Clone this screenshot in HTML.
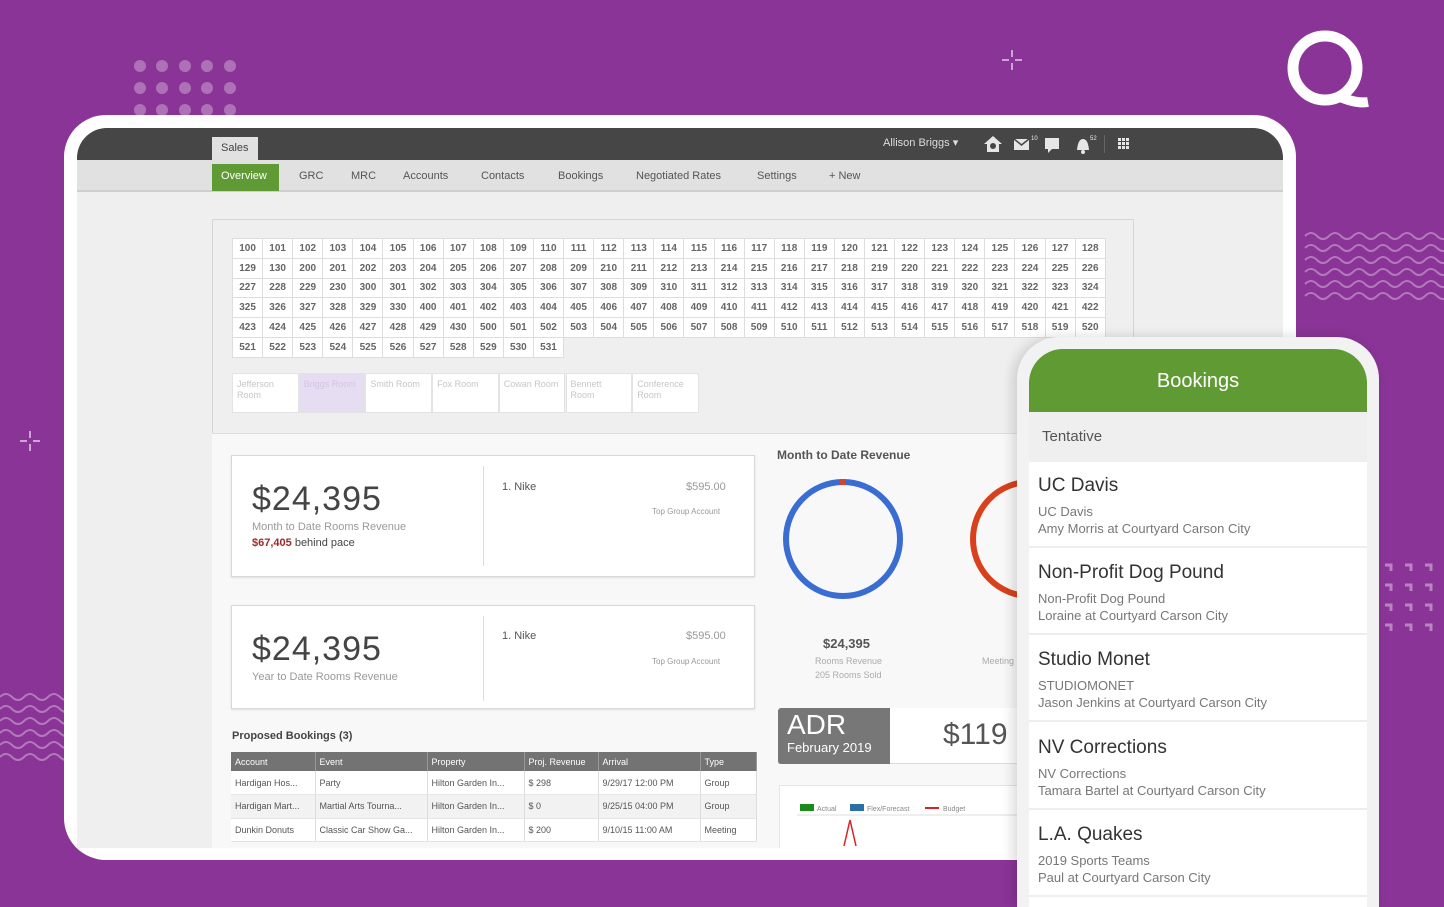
<!DOCTYPE html>
<html style="width:1444px;height:907px;overflow:hidden"><head><meta charset="utf-8"><style>
*{margin:0;padding:0;box-sizing:border-box}
body{width:1444px;height:907px;overflow:hidden;background:#8a3497;font-family:"Liberation Sans",sans-serif;position:relative}
.abs{position:absolute}
.tablet{left:64px;top:115px;width:1232px;height:745px;background:#fff;border-radius:42px}
.screen{left:77px;top:128px;width:1206px;height:720px;background:#efefef;border-radius:30px 30px 0 0;overflow:hidden}
.top{left:0;top:0;width:1206px;height:32px;background:#464646}
.nav{left:0;top:32px;width:1206px;height:32px;background:#e1e1e1;border-bottom:2px solid #cfcfcf}
.nav span{position:absolute;top:10px;font-size:11px;color:#555}
table.rooms{border-collapse:collapse;position:absolute;left:155px;top:110px}
table.rooms td{width:30.1px;height:19.8px;border:1px solid #ddd;background:#fff;font-size:10px;font-weight:bold;color:#666;text-align:center}
.rl{position:absolute;top:245px;height:40px;width:66.7px;background:#fff;border:1px solid #e3e3e3;font-size:9px;color:#c6c6c6;padding:5px 4px;line-height:11px}
.box{background:#fff;border:1px solid #d8d8d8;box-shadow:0 1px 2px rgba(0,0,0,.1)}
.big{font-size:34px;color:#444;letter-spacing:1px}
.sub{font-size:11px;color:#999}
table.pb{border-collapse:collapse;position:absolute;left:154px;top:624px;width:526px;font-size:9px;color:#555}
table.pb th{background:#737373;color:#fff;text-align:left;font-weight:normal;height:19px;padding-left:4px;border-right:1px solid #999}
table.pb td{height:23.5px;padding-left:4px;border-right:1px solid #ddd;border-bottom:1px solid #e5e5e5;background:#fff}
table.pb tr:nth-child(3) td{background:#f2f2f2}
.phone{left:1017px;top:337px;width:362px;height:570px;background:#f2f2f2;border-radius:42px 42px 0 0;box-shadow:-4px 0 12px rgba(0,0,0,.15);overflow:hidden}
.pin{left:12px;top:12px;width:338px;height:558px;background:#fff;border-radius:34px 34px 0 0;overflow:hidden}
.item{position:absolute;left:0;width:338px;height:85px;background:#fff;border-bottom:2px solid #eee;padding:12px 9px}
.item h3{font-weight:normal;font-size:19px;color:#333;margin-bottom:6px}
.item p{font-size:13px;color:#777;line-height:17px}
.dot{position:absolute;width:12px;height:12px;border-radius:50%;background:rgba(255,255,255,.3)}
</style></head><body>
<div class="dot" style="left:134px;top:60px"></div><div class="dot" style="left:156px;top:60px"></div><div class="dot" style="left:179px;top:60px"></div><div class="dot" style="left:201px;top:60px"></div><div class="dot" style="left:224px;top:60px"></div>
<div class="dot" style="left:134px;top:82px"></div><div class="dot" style="left:156px;top:82px"></div><div class="dot" style="left:179px;top:82px"></div><div class="dot" style="left:201px;top:82px"></div><div class="dot" style="left:224px;top:82px"></div>
<div class="dot" style="left:134px;top:104px"></div><div class="dot" style="left:156px;top:104px"></div><div class="dot" style="left:179px;top:104px"></div><div class="dot" style="left:201px;top:104px"></div><div class="dot" style="left:224px;top:104px"></div>
<svg class="abs" style="left:0;top:0" width="1444" height="907">
<g stroke="rgba(255,255,255,.75)" stroke-width="1.5" fill="none">
<path d="M1012 50v7M1012 63v7M1002 60h7M1015 60h7"/>
<path d="M30 431v7M30 444v7M20 441h7M33 441h7"/>
</g>
<g stroke="rgba(255,255,255,.35)" stroke-width="2" fill="none">
<path d="M1305 236q6-6 12 0t12 0t12 0t12 0t12 0t12 0t12 0t12 0t12 0t12 0t12 0t12 0"/>
<path d="M1305 248q6-6 12 0t12 0t12 0t12 0t12 0t12 0t12 0t12 0t12 0t12 0t12 0t12 0"/>
<path d="M1305 260q6-6 12 0t12 0t12 0t12 0t12 0t12 0t12 0t12 0t12 0t12 0t12 0t12 0"/>
<path d="M1305 272q6-6 12 0t12 0t12 0t12 0t12 0t12 0t12 0t12 0t12 0t12 0t12 0t12 0"/>
<path d="M1305 284q6-6 12 0t12 0t12 0t12 0t12 0t12 0t12 0t12 0t12 0t12 0t12 0t12 0"/>
<path d="M1305 296q6-6 12 0t12 0t12 0t12 0t12 0t12 0t12 0t12 0t12 0t12 0t12 0t12 0"/>
<path d="M0 697q6-6 12 0t12 0t12 0t12 0t12 0t12 0"/>
<path d="M0 709q6-6 12 0t12 0t12 0t12 0t12 0t12 0"/>
<path d="M0 721q6-6 12 0t12 0t12 0t12 0t12 0t12 0"/>
<path d="M0 733q6-6 12 0t12 0t12 0t12 0t12 0t12 0"/>
<path d="M0 745q6-6 12 0t12 0t12 0t12 0t12 0t12 0"/>
<path d="M0 757q6-6 12 0t12 0t12 0t12 0t12 0t12 0"/>
</g>
<g stroke="rgba(255,255,255,.4)" stroke-width="3" fill="none">
<path d="M1385 565h6v6M1405 565h6v6M1425 565h6v6M1385 585h6v6M1405 585h6v6M1425 585h6v6M1385 605h6v6M1405 605h6v6M1425 605h6v6M1385 625h6v6M1405 625h6v6M1425 625h6v6"/>
</g>
<circle cx="1325" cy="68" r="32" stroke="#fff" stroke-width="11" fill="none"/>
<path d="M1338 96q18 8 30 6" stroke="#fff" stroke-width="10" fill="none"/>
</svg>
<div class="abs tablet"></div>
<div class="abs screen">
 <div class="abs top"></div>
 <div class="abs" style="left:135px;top:9px;width:46px;height:23px;background:#e1e1e1;font-size:11px;color:#444;padding:5px 0 0 9px">Sales</div>
 <div class="abs" style="left:806px;top:8px;font-size:11px;color:#ddd">Allison Briggs ▾</div>
 <svg class="abs" style="left:905px;top:5px" width="160" height="22" fill="#e6e6e6">
  <path d="M2 11l9-8 9 8h-3v8H5v-8z"/><circle cx="11" cy="13" r="3" fill="#464646"/>
  <rect x="32" y="6" width="15" height="11"/><path d="M32 6l7.5 6 7.5-6" stroke="#464646" fill="none" stroke-width="1.5"/>
  <text x="49" y="7" font-size="6" fill="#eee">10</text>
  <rect x="63" y="5" width="14" height="11"/><path d="M66 16l0 4 4-4z"/>
  <path d="M95 17q1-11 6-11t6 11z"/><circle cx="101" cy="19" r="2"/><text x="108" y="7" font-size="6" fill="#eee">52</text>
  <rect x="122" y="2" width="1" height="18" fill="#666"/>
  <g><rect x="136" y="5" width="3" height="3"/><rect x="140" y="5" width="3" height="3"/><rect x="144" y="5" width="3" height="3"/><rect x="136" y="9" width="3" height="3"/><rect x="140" y="9" width="3" height="3"/><rect x="144" y="9" width="3" height="3"/><rect x="136" y="13" width="3" height="3"/><rect x="140" y="13" width="3" height="3"/><rect x="144" y="13" width="3" height="3"/></g>
 </svg>
 <div class="abs nav">
  <div class="abs" style="left:135px;top:4px;width:67px;height:27px;background:#5f9a35"></div>
  <span style="left:144px;color:#fff">Overview</span><span style="left:222px">GRC</span><span style="left:274px">MRC</span><span style="left:326px">Accounts</span><span style="left:404px">Contacts</span><span style="left:481px">Bookings</span><span style="left:559px">Negotiated Rates</span><span style="left:680px">Settings</span><span style="left:752px">+ New</span>
 </div>
 <div class="abs" style="left:135px;top:91px;width:922px;height:215px;border:1px solid #d5d5d5;border-bottom:none"></div>
 <table class="rooms">
 <tr><td>100</td><td>101</td><td>102</td><td>103</td><td>104</td><td>105</td><td>106</td><td>107</td><td>108</td><td>109</td><td>110</td><td>111</td><td>112</td><td>113</td><td>114</td><td>115</td><td>116</td><td>117</td><td>118</td><td>119</td><td>120</td><td>121</td><td>122</td><td>123</td><td>124</td><td>125</td><td>126</td><td>127</td><td>128</td></tr>
 <tr><td>129</td><td>130</td><td>200</td><td>201</td><td>202</td><td>203</td><td>204</td><td>205</td><td>206</td><td>207</td><td>208</td><td>209</td><td>210</td><td>211</td><td>212</td><td>213</td><td>214</td><td>215</td><td>216</td><td>217</td><td>218</td><td>219</td><td>220</td><td>221</td><td>222</td><td>223</td><td>224</td><td>225</td><td>226</td></tr>
 <tr><td>227</td><td>228</td><td>229</td><td>230</td><td>300</td><td>301</td><td>302</td><td>303</td><td>304</td><td>305</td><td>306</td><td>307</td><td>308</td><td>309</td><td>310</td><td>311</td><td>312</td><td>313</td><td>314</td><td>315</td><td>316</td><td>317</td><td>318</td><td>319</td><td>320</td><td>321</td><td>322</td><td>323</td><td>324</td></tr>
 <tr><td>325</td><td>326</td><td>327</td><td>328</td><td>329</td><td>330</td><td>400</td><td>401</td><td>402</td><td>403</td><td>404</td><td>405</td><td>406</td><td>407</td><td>408</td><td>409</td><td>410</td><td>411</td><td>412</td><td>413</td><td>414</td><td>415</td><td>416</td><td>417</td><td>418</td><td>419</td><td>420</td><td>421</td><td>422</td></tr>
 <tr><td>423</td><td>424</td><td>425</td><td>426</td><td>427</td><td>428</td><td>429</td><td>430</td><td>500</td><td>501</td><td>502</td><td>503</td><td>504</td><td>505</td><td>506</td><td>507</td><td>508</td><td>509</td><td>510</td><td>511</td><td>512</td><td>513</td><td>514</td><td>515</td><td>516</td><td>517</td><td>518</td><td>519</td><td>520</td></tr>
 <tr><td>521</td><td>522</td><td>523</td><td>524</td><td>525</td><td>526</td><td>527</td><td>528</td><td>529</td><td>530</td><td>531</td></tr>
 </table>
 <div class="rl" style="left:155px">Jefferson Room</div>
 <div class="rl" style="left:221.7px;background:#e7ddf2;color:#d2c4e2">Briggs Room</div>
 <div class="rl" style="left:288.4px">Smith Room</div>
 <div class="rl" style="left:355.1px">Fox Room</div>
 <div class="rl" style="left:421.8px">Cowan Room</div>
 <div class="rl" style="left:488.5px">Bennett Room</div>
 <div class="rl" style="left:555.2px">Conference Room</div>
 <div class="abs" style="left:135px;top:305px;width:1071px;height:420px;background:#f8f8f8;border-top:1px solid #ddd"></div>
 <div class="abs box" style="left:154px;top:327px;width:524px;height:122px">
  <div class="abs big" style="left:20px;top:24px">$24,395</div>
  <div class="abs sub" style="left:20px;top:65px">Month to Date Rooms Revenue</div>
  <div class="abs" style="left:20px;top:81px;font-size:11px;color:#444"><b style="color:#9b2a2a">$67,405</b> behind pace</div>
  <div class="abs" style="left:251px;top:10px;width:1px;height:100px;background:#ddd"></div>
  <div class="abs" style="left:270px;top:25px;font-size:11px;color:#555">1. Nike</div>
  <div class="abs" style="left:454px;top:25px;font-size:11px;color:#999">$595.00</div>
  <div class="abs" style="left:420px;top:51px;font-size:8px;color:#999">Top Group Account</div>
 </div>
 <div class="abs box" style="left:154px;top:477px;width:524px;height:104px">
  <div class="abs big" style="left:20px;top:24px">$24,395</div>
  <div class="abs sub" style="left:20px;top:65px">Year to Date Rooms Revenue</div>
  <div class="abs" style="left:251px;top:10px;width:1px;height:85px;background:#ddd"></div>
  <div class="abs" style="left:270px;top:24px;font-size:11px;color:#555">1. Nike</div>
  <div class="abs" style="left:454px;top:24px;font-size:11px;color:#999">$595.00</div>
  <div class="abs" style="left:420px;top:51px;font-size:8px;color:#999">Top Group Account</div>
 </div>
 <div class="abs" style="left:155px;top:602px;font-size:11px;font-weight:bold;color:#444">Proposed Bookings (3)</div>
 <table class="pb">
  <tr><th style="width:84px">Account</th><th style="width:112px">Event</th><th style="width:97px">Property</th><th style="width:74px">Proj. Revenue</th><th style="width:102px">Arrival</th><th>Type</th></tr>
  <tr><td>Hardigan Hos...</td><td>Party</td><td>Hilton Garden In...</td><td>$ 298</td><td>9/29/17 12:00 PM</td><td>Group</td></tr>
  <tr><td>Hardigan Mart...</td><td>Martial Arts Tourna...</td><td>Hilton Garden In...</td><td>$ 0</td><td>9/25/15 04:00 PM</td><td>Group</td></tr>
  <tr><td>Dunkin Donuts</td><td>Classic Car Show Ga...</td><td>Hilton Garden In...</td><td>$ 200</td><td>9/10/15 11:00 AM</td><td>Meeting</td></tr>
 </table>
 <div class="abs" style="left:700px;top:320px;font-size:12px;font-weight:bold;color:#555">Month to Date Revenue</div>
 <svg class="abs" style="left:690px;top:340px" width="300" height="150">
  <circle cx="76" cy="71" r="57" stroke="#3a6dd2" stroke-width="6" fill="none"/>
  <path d="M73 14h6" stroke="#d3452b" stroke-width="6"/>
  <circle cx="263" cy="71" r="57" stroke="#d8411c" stroke-width="6" fill="none"/>
 </svg>
 <div class="abs" style="left:746px;top:508px;font-size:13px;font-weight:bold;color:#555">$24,395</div>
 <div class="abs" style="left:738px;top:528px;font-size:9px;color:#aaa">Rooms Revenue</div>
 <div class="abs" style="left:738px;top:542px;font-size:9px;color:#aaa">205 Rooms Sold</div>
 <div class="abs" style="left:905px;top:528px;font-size:9px;color:#aaa">Meeting</div>
 <div class="abs" style="left:701px;top:580px;width:240px;height:56px;background:#fff;border-bottom:1px solid #ddd"></div>
 <div class="abs" style="left:701px;top:580px;width:112px;height:56px;background:#777;border-radius:3px 0 0 3px;color:#fff;padding:2px 9px">
  <div style="font-size:28px;line-height:30px">ADR</div><div style="font-size:13px">February 2019</div></div>
 <div class="abs" style="left:866px;top:590px;font-size:30px;color:#555">$119</div>
 <div class="abs" style="left:702px;top:657px;width:240px;height:70px;background:#fff;border:1px solid #e5e5e5"></div>
 <svg class="abs" style="left:720px;top:672px" width="230" height="50">
  <rect x="3" y="4" width="14" height="7" fill="#1a8a1a"/><text x="20" y="11" font-size="7" fill="#888">Actual</text>
  <rect x="53" y="4" width="14" height="7" fill="#2a6fa8"/><text x="70" y="11" font-size="7" fill="#888">Flex/Forecast</text>
  <path d="M128 8h14" stroke="#d22" stroke-width="2"/><text x="146" y="11" font-size="7" fill="#888">Budget</text>
  <path d="M0 15h230" stroke="#ddd"/>
  <path d="M47 46l6-26 6 26" stroke="#d22" stroke-width="1.5" fill="none"/>
 </svg>
</div>
<div class="abs phone">
 <div class="abs pin">
  <div class="abs" style="left:0;top:0;width:338px;height:63px;background:#609a33;color:#fff;font-size:20px;text-align:center;padding-top:21px">Bookings</div>
  <div class="abs" style="left:0;top:63px;width:338px;height:50px;background:#efefef;font-size:15px;color:#555;padding:16px 13px">Tentative</div>
  <div class="item" style="top:114px"><h3>UC Davis</h3><p>UC Davis<br>Amy Morris at Courtyard Carson City</p></div>
  <div class="item" style="top:201px"><h3>Non-Profit Dog Pound</h3><p>Non-Profit Dog Pound<br>Loraine at Courtyard Carson City</p></div>
  <div class="item" style="top:288px"><h3>Studio Monet</h3><p>STUDIOMONET<br>Jason Jenkins at Courtyard Carson City</p></div>
  <div class="item" style="top:376px"><h3>NV Corrections</h3><p>NV Corrections<br>Tamara Bartel at Courtyard Carson City</p></div>
  <div class="item" style="top:463px"><h3>L.A. Quakes</h3><p>2019 Sports Teams<br>Paul at Courtyard Carson City</p></div>
 </div>
</div>
</body></html>
